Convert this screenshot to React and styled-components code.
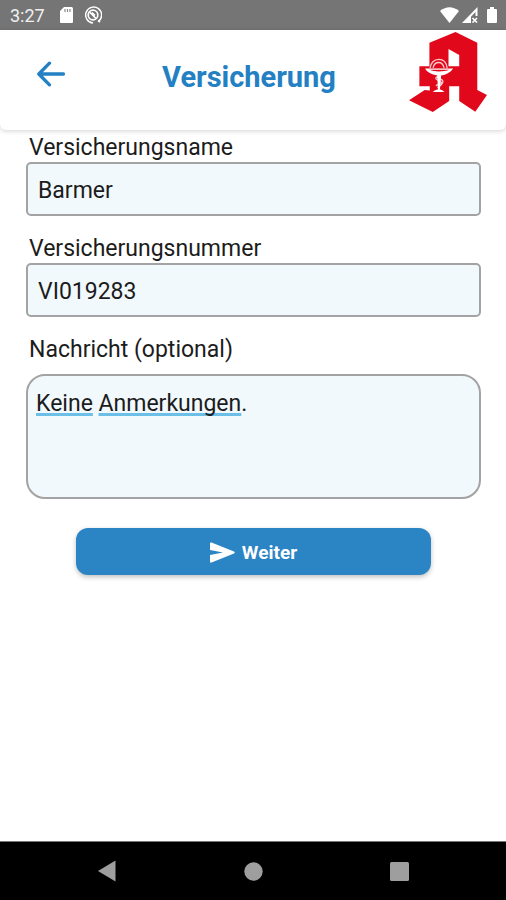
import React, { useState } from "react";
import styled, { createGlobalStyle } from "styled-components";

const GlobalStyle = createGlobalStyle`
  * {
    box-sizing: border-box;
  }

  body {
    margin: 0;
    background: #fff;
    color: #1c1c1c;
    font-family: Roboto, "Liberation Sans", sans-serif;
  }
`;

const Screen = styled.div`
  display: flex;
  flex-direction: column;
  min-height: 100vh;
`;

const StatusBar = styled.div`
  display: flex;
  align-items: center;
  justify-content: space-between;
  height: 30px;
  padding: 0 8px 0 10px;
  background: #757575;
  color: #fff;
`;

const StatusGroup = styled.div`
  display: flex;
  align-items: center;
  gap: ${props => props.gap}px;
`;

const Clock = styled.span`
  padding: 2px 4px 0 0;
  font-size: 18px;
  line-height: 28px;
  color: #f0f0f0;
`;

const Header = styled.header`
  display: grid;
  grid-template-columns: 80px 1fr 80px;
  align-items: center;
  height: 100px;
  padding: 0 19px 0 11px;
  background: #fff;
  border-radius: 0 0 6px 6px;
  box-shadow: 0 1px 5px rgba(0, 0, 0, 0.18);
`;

const BackButton = styled.button`
  display: flex;
  justify-content: center;
  justify-self: start;
  width: 80px;
  padding: 0 0 12px;
  border: 0;
  background: none;
  cursor: pointer;
`;

const Title = styled.h1`
  margin: 0;
  padding-bottom: 6px;
  color: #2380c3;
  font-size: 29px;
  font-weight: 700;
  line-height: 34px;
  text-align: center;
`;

const Logo = styled.svg`
  display: block;
  justify-self: end;
  align-self: start;
  width: 78px;
  height: 80px;
  margin-top: 2px;
`;

const Form = styled.form`
  display: flex;
  flex-direction: column;
  flex: 1;
  padding: 2px 25px 24px 26px;
`;

const Field = styled.div`
  display: flex;
  flex-direction: column;
  gap: ${props => props.gap || 0}px;
  margin-bottom: ${props => (props.last ? 29 : 17)}px;
`;

const Label = styled.label`
  padding: 2px 0 0 3px;
  font-size: 23px;
  line-height: 28px;
`;

const Input = styled.input`
  width: 100%;
  height: 54px;
  padding: 2px 10px 0;
  border: 2px solid #a3a3a3;
  border-radius: 5px;
  outline: none;
  background: #f1f9fd;
  color: inherit;
  font-family: inherit;
  font-size: 23px;
`;

const MessageBox = styled.div`
  display: grid;
  height: 125px;
  border: 2px solid #a3a3a3;
  border-radius: 19px;
  overflow: hidden;
  background: #f1f9fd;
  font-size: 23px;
  line-height: 28px;

  > * {
    grid-area: 1 / 1;
    padding: 14px 8px;
  }
`;

const SpellMarks = styled.div`
  color: transparent;
  white-space: pre-wrap;
  overflow-wrap: break-word;
`;

const Marked = styled.span`
  text-decoration: underline #6cbfe6 3px;
  text-decoration-skip-ink: none;
  text-underline-offset: 2px;
`;

const TextArea = styled.textarea`
  width: 100%;
  margin: 0;
  border: 0;
  outline: none;
  resize: none;
  background: transparent;
  color: inherit;
  font: inherit;
`;

const SubmitButton = styled.button`
  display: flex;
  align-items: center;
  align-self: center;
  justify-content: center;
  gap: 7px;
  width: 78%;
  height: 47px;
  padding: 2px 0 0;
  border: 0;
  border-radius: 12px;
  background: #2b84c3;
  box-shadow: 0 2px 5px rgba(0, 0, 0, 0.25);
  color: #fff;
  font-family: inherit;
  font-size: 19px;
  font-weight: 700;
  cursor: pointer;
`;

const NavBar = styled.nav`
  display: flex;
  align-items: center;
  justify-content: space-around;
  height: 59px;
  padding: 0 34px;
  border-top: 1px solid #777;
  background: #000;
`;

const NavButton = styled.button`
  display: flex;
  padding: 0;
  border: 0;
  background: none;
  cursor: pointer;
`;

const PharmacyLogo = () => (
  <Logo viewBox="27 96 233 239" role="img" aria-label="Apotheke">
    <path
      fill="#e2081b"
      fillRule="evenodd"
      d="M166 96 231 128V269L260 284 225 334 177 302V258H147V302L98 335 27 300 74 269 89 271V258H58V198H88V128ZM145 147V198H177V165Z"
    />
    <g fill="none" stroke="#f8c9cd" strokeWidth="4">
      <path d="M90 204C91 189 101 178 116 178S139 188 141 204" />
      <path d="M99 203C101 192 107 187 116 187S129 192 132 203" />
      <path d="M110 230C98 240 131 243 125 252S106 259 119 267" />
      <path d="M110 230C124 238 132 241 127 248S110 249 108 258" />
    </g>
    <path fill="#fff" d="M75 205H159C151 217 137 224 123 226L119 271H114L111 226C95 223 80 216 75 205Z" />
    <path fill="#e2081b" d="M88 209H148C139 213 127 214 116 214S97 213 88 209Z" />
    <path fill="#fff" d="M98 275C104 269 110 268 116 268S127 269 133 275Z" />
  </Logo>
);

// words are marked the way the keyboard's spell checker does
const markWords = text =>
  text
    .split(/([A-Za-zÄÖÜäöüß]+)/)
    .map((part, i) => (i % 2 ? <Marked key={i}>{part}</Marked> : part));

export default function App() {
  const [name, setName] = useState("Barmer");
  const [number, setNumber] = useState("VI019283");
  const [message, setMessage] = useState("Keine Anmerkungen.");

  return (
    <Screen>
      <GlobalStyle />
      <StatusBar>
        <StatusGroup gap={11}>
          <Clock>3:27</Clock>
          <svg width="13" height="17" viewBox="0 0 13 17" aria-hidden="true">
            <path fill="#fff" d="M4 0H11.5Q13 0 13 1.5V15Q13 16 12 16H1Q0 16 0 15V4Z" />
            <path stroke="#8a8a8a" strokeWidth="1.2" d="M5 2V5M7.5 2V5M10 2V5" />
          </svg>
          <svg width="18" height="18" viewBox="0 0 18 18" fill="none" stroke="#fff" aria-hidden="true">
            <path strokeWidth="1.5" d="M14.5 15.4A8 8 0 1 0 9 17" />
            <circle cx="9" cy="9" r="4.8" strokeWidth="1.7" />
            <path strokeWidth="1.7" d="M5.5 6 12 12.5M8 6.5 11 9.5M14 14.5 16 16" />
          </svg>
        </StatusGroup>
        <StatusGroup gap={3}>
          <svg width="19" height="16" viewBox="0 0 19 16" aria-hidden="true">
            <path fill="#fff" d="M0 4Q9.5-3.5 19 4L9.5 16Z" />
          </svg>
          <svg width="16" height="16" viewBox="0 0 16 16" aria-hidden="true">
            <path
              fill="#fff"
              fillRule="evenodd"
              d="M0 16 15.5 0V9H13.5V5L9 9.8V16Z"
            />
            <path stroke="#fff" strokeWidth="1.6" d="M10.5 11 15 15.5M15 11 10.5 15.5" />
          </svg>
          <svg width="17" height="17" viewBox="0 0 17 17" aria-hidden="true">
            <path
              fill="#fff"
              d="M9 0H13V2H15Q16 2 16 3V15Q16 16 15 16H7Q6 16 6 15V3Q6 2 7 2H9Z"
            />
          </svg>
        </StatusGroup>
      </StatusBar>

      <Header>
        <BackButton type="button" aria-label="Zurück">
          <svg
            width="30"
            height="26"
            viewBox="0 0 30 26"
            fill="none"
            stroke="#2380c3"
            strokeWidth="3.3"
            strokeLinecap="round"
            strokeLinejoin="round"
          >
            <path d="M27.5 13H3M13.5 2.2 2.8 13 13.5 23.8" />
          </svg>
        </BackButton>
        <Title>Versicherung</Title>
        <PharmacyLogo />
      </Header>

      <Form onSubmit={e => e.preventDefault()}>
        <Field>
          <Label htmlFor="name">Versicherungsname</Label>
          <Input id="name" value={name} onChange={e => setName(e.target.value)} />
        </Field>
        <Field>
          <Label htmlFor="number">Versicherungsnummer</Label>
          <Input id="number" value={number} onChange={e => setNumber(e.target.value)} />
        </Field>
        <Field gap={10} last>
          <Label htmlFor="message">Nachricht (optional)</Label>
          <MessageBox>
            <SpellMarks aria-hidden="true">{markWords(message)}</SpellMarks>
            <TextArea
              id="message"
              spellCheck={false}
              value={message}
              onChange={e => setMessage(e.target.value)}
            />
          </MessageBox>
        </Field>
        <SubmitButton type="submit">
          <svg width="25" height="22" viewBox="0 0 25 22" aria-hidden="true">
            <path
              fill="#fff"
              d="M0 1.5Q0 0 1.5 .5L24 9.5Q25.5 10.5 24 11.5L1.5 20.5Q0 21 0 19.5V13L13 10.5 0 8Z"
            />
          </svg>
          Weiter
        </SubmitButton>
      </Form>

      <NavBar>
        <NavButton type="button" aria-label="Zurück">
          <svg width="19" height="22" viewBox="0 0 19 22">
            <path fill="#9e9e9e" d="M0 11 17.5 .5V21.5Z" />
          </svg>
        </NavButton>
        <NavButton type="button" aria-label="Startbildschirm">
          <svg width="19" height="19" viewBox="0 0 19 19">
            <circle cx="9.5" cy="9.5" r="9.2" fill="#9e9e9e" />
          </svg>
        </NavButton>
        <NavButton type="button" aria-label="Übersicht">
          <svg width="19" height="19" viewBox="0 0 19 19">
            <rect width="19" height="19" rx="1.5" fill="#9e9e9e" />
          </svg>
        </NavButton>
      </NavBar>
    </Screen>
  );
}
